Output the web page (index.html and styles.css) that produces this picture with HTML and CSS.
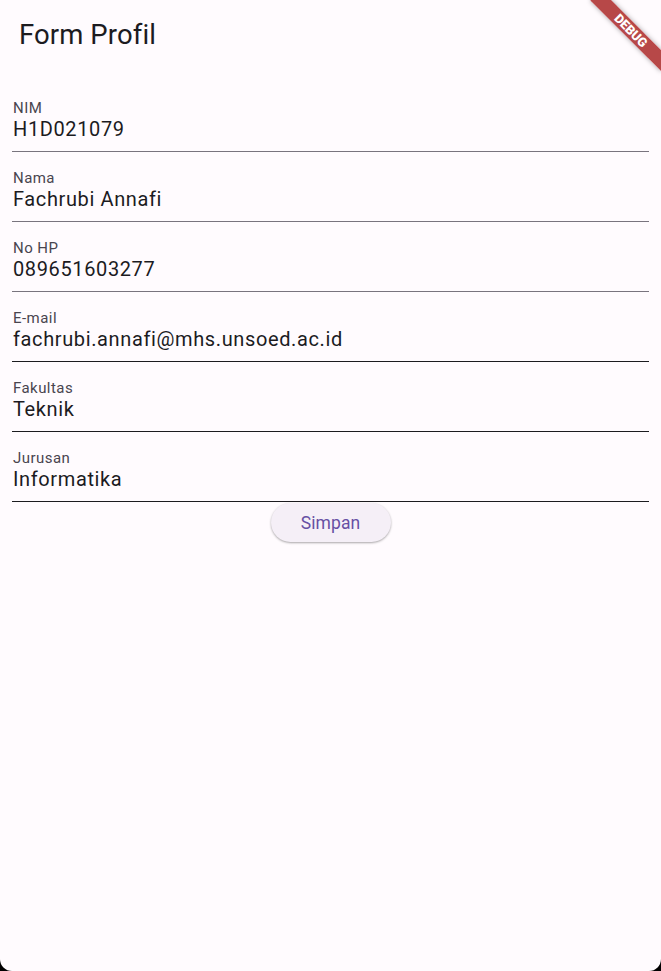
FILE: index.html
```html
<!DOCTYPE html>
<html lang="id">
<head>
<meta charset="utf-8">
<title>Form Profil</title>
<link rel="stylesheet" href="styles.css">
</head>
<body>
<div class="screen">
  <header class="appbar">
    <h1 class="title">Form Profil</h1>
  </header>
  <main class="form">
    <div class="field field-muted">
      <div class="label">NIM</div>
      <div class="value">H1D021079</div>
    </div>
    <div class="field field-muted">
      <div class="label">Nama</div>
      <div class="value">Fachrubi Annafi</div>
    </div>
    <div class="field field-muted">
      <div class="label">No HP</div>
      <div class="value">089651603277</div>
    </div>
    <div class="field">
      <div class="label">E-mail</div>
      <div class="value">fachrubi.annafi@mhs.unsoed.ac.id</div>
    </div>
    <div class="field">
      <div class="label">Fakultas</div>
      <div class="value">Teknik</div>
    </div>
    <div class="field">
      <div class="label">Jurusan</div>
      <div class="value">Informatika</div>
    </div>
    <div class="actions">
      <button class="btn" type="button">Simpan</button>
    </div>
  </main>
  <div class="debug-banner">DEBUG</div>
</div>
</body>
</html>
```

FILE: styles.css
```css
html {
  margin: 0;
  padding: 0;
  background: #000;
}
body {
  margin: 0;
  padding: 0;
  font-family: Roboto, "Noto Sans", sans-serif;
}
.screen {
  position: relative;
  height: 971px;
  overflow: hidden;
  background: #fffbfe;
  border-radius: 0 0 12px 12px;
}
.appbar {
  height: 70px;
  display: flex;
  align-items: center;
  padding-left: 19px;
}
.title {
  margin: 0;
  font-size: 27.5px;
  line-height: 34px;
  font-weight: 400;
  letter-spacing: 0.1px;
  color: #1c1b1f;
}
.form {
  padding: 12px 12px 0;
  display: flex;
  flex-direction: column;
}
.field {
  padding: 17px 0 10px 1px;
  border-bottom: 1px solid #1c1b1f;
}
.field-muted {
  border-bottom-color: #79747e;
}
.label {
  font-size: 15px;
  line-height: 18px;
  letter-spacing: 0.45px;
  color: #49454f;
}
.value {
  font-size: 20px;
  line-height: 24px;
  letter-spacing: 0.62px;
  color: #1c1b1f;
}
.actions {
  display: flex;
  justify-content: center;
  padding-top: 1px;
}
.btn {
  height: 39px;
  width: 120px;
  border: none;
  border-radius: 20px;
  background: #f5eff7;
  color: #6750a4;
  font-family: Roboto, "Noto Sans", sans-serif;
  font-size: 17.5px;
  font-weight: 400;
  letter-spacing: 0.12px;
  box-shadow: 0 1px 2px rgba(0, 0, 0, 0.25), 0 1px 3px rgba(0, 0, 0, 0.1);
}
.debug-banner {
  position: absolute;
  left: 581px;
  top: 22.5px;
  width: 100px;
  height: 15px;
  transform: rotate(45deg);
  background: rgba(170, 40, 40, 0.85);
  box-shadow: 0 0 5px rgba(0, 0, 0, 0.35);
  color: #fff;
  font-family: Roboto, sans-serif;
  font-size: 12.75px;
  font-weight: 900;
  line-height: 15px;
  text-align: center;
}
```
